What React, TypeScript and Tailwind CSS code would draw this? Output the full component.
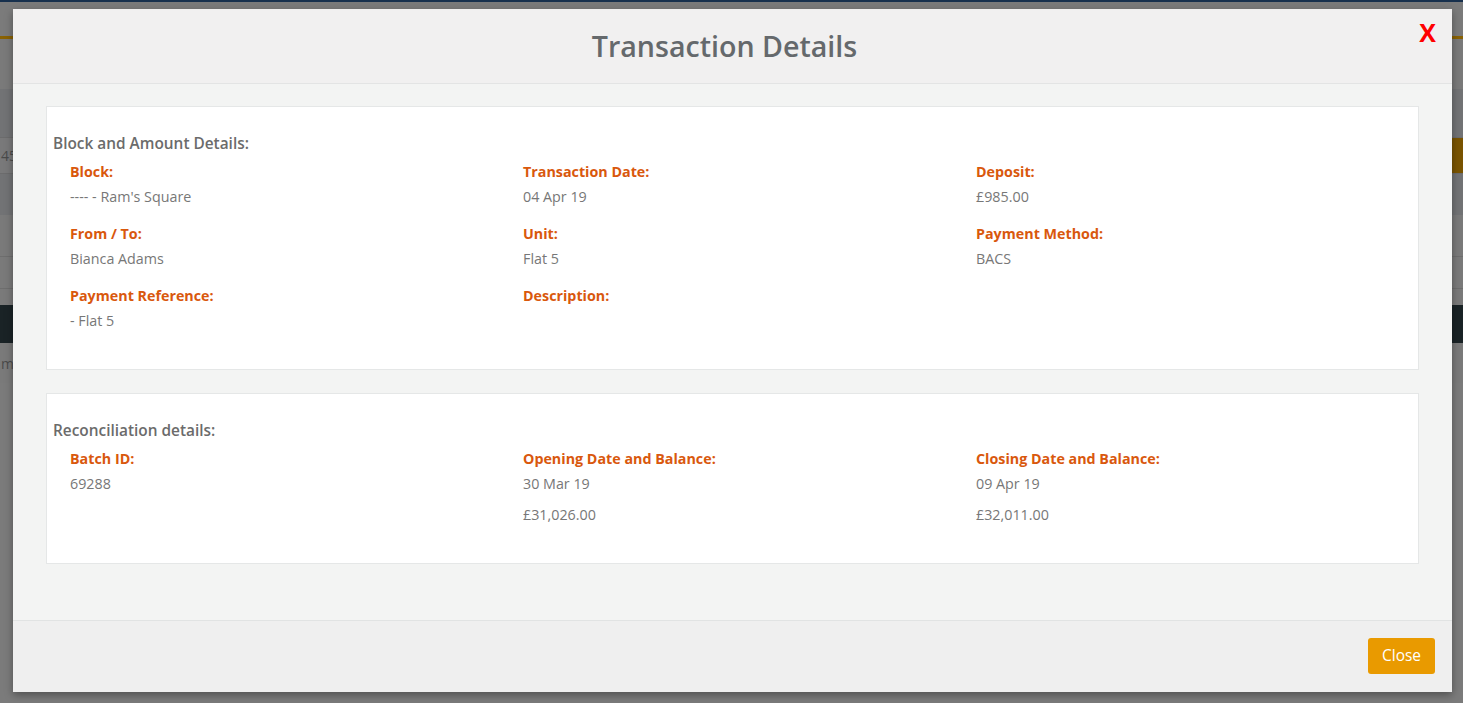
import React from "react";

const Field = ({ label, values }: { label: string; values: string[] }) => (
  <div className="flex flex-col">
    <div className="h-[20px] leading-[20px] text-[14.3px] font-bold text-[#d9580d]">{label}</div>
    {values.map((v, i) => (
      <div key={i} className={`h-[20px] leading-[20px] text-[14.3px] text-[#777777] ${i === 0 ? "mt-[5px]" : "mt-[11px]"}`}>
        {v}
      </div>
    ))}
  </div>
);

export default function App() {
  return (
    <div className="relative w-[1463px] h-[703px] overflow-hidden bg-[#7b7b7b]" style={{ fontFamily: '"Open Sans", "Noto Sans", sans-serif' }}>
      {/* dimmed background page */}
      <div className="flex flex-col w-full">
        <div className="h-[2px] bg-[#17304d]" />
        <div className="h-[34px] bg-[#7b7b7b]" />
        <div className="h-[3px] bg-[#8a6203]" />
        <div className="h-[50px] bg-[#7a7a7a]" />
        <div className="h-[48px] bg-[#727375]" />
        <div className="h-[37px] bg-[#79797a] border-y border-[#6c6c6d] flex items-center justify-between">
          <span className="text-[14px] text-[#4a4a4a] pl-[1px] w-[13px] overflow-hidden whitespace-nowrap">45</span>
          <div className="h-full w-[40px] bg-[#7a5400] flex items-center pl-[3px] text-[14px] text-[#b59a66]">U</div>
        </div>
        <div className="h-[41px] bg-[#727375]" />
        <div className="h-[41px] bg-[#7a7a7a]" />
        <div className="h-[33px] bg-[#7a7a7a] border-y border-[#6e6e6e]" />
        <div className="h-[16px] bg-[#7a7a7a]" />
        <div className="h-[38px] bg-[#1a2326]" />
        <div className="h-[40px] bg-[#7a7a7a] flex items-center">
          <span className="text-[14px] text-[#4a4a4a] pl-[1px] w-[13px] overflow-hidden whitespace-nowrap">m'</span>
        </div>
      </div>

      {/* modal */}
      <div className="absolute left-[13px] top-[9px] w-[1439px] h-[683px] flex flex-col bg-[#f3f4f3] shadow-[0_3px_8px_rgba(0,0,0,0.35)]">
        <div className="relative h-[75px] shrink-0 bg-[#f1f0f0] border-b border-[#e3e4e4] flex items-center justify-center pr-[16px]">
          <h1 className="text-[28.6px] font-semibold text-[#65696c] leading-none">Transaction Details</h1>
          <button className="absolute right-[16px] top-[11px] text-[25px] font-bold text-[#ff0000] leading-none">X</button>
        </div>

        <div className="flex-1 px-[33px] pt-[22px] flex flex-col gap-[23px]">
          <div className="bg-white border border-[#e5e7e7] pt-[27px] pb-[38px] px-[6px]">
            <div className="h-[20px] leading-[20px] text-[15.4px] font-semibold text-[#6b6b6b]">Block and Amount Details:</div>
            <div className="mt-[8px] px-[2px] grid grid-cols-3 gap-y-[17px] w-[1363px]">
              <div className="px-[15px]"><Field label="Block:" values={["---- - Ram's Square"]} /></div>
              <div className="px-[15px]"><Field label="Transaction Date:" values={["04 Apr 19"]} /></div>
              <div className="px-[15px]"><Field label="Deposit:" values={["£985.00"]} /></div>
              <div className="px-[15px]"><Field label="From / To:" values={["Bianca Adams"]} /></div>
              <div className="px-[15px]"><Field label="Unit:" values={["Flat 5"]} /></div>
              <div className="px-[15px]"><Field label="Payment Method:" values={["BACS"]} /></div>
              <div className="px-[15px]"><Field label="Payment Reference:" values={["- Flat 5"]} /></div>
              <div className="px-[15px]"><Field label="Description:" values={[]} /></div>
              <div className="px-[15px]" />
            </div>
          </div>

          <div className="bg-white border border-[#e5e7e7] pt-[27px] pb-[38px] px-[6px]">
            <div className="h-[20px] leading-[20px] text-[15.4px] font-semibold text-[#6b6b6b]">Reconciliation details:</div>
            <div className="mt-[8px] px-[2px] grid grid-cols-3 w-[1363px]">
              <div className="px-[15px]"><Field label="Batch ID:" values={["69288"]} /></div>
              <div className="px-[15px]"><Field label="Opening Date and Balance:" values={["30 Mar 19", "£31,026.00"]} /></div>
              <div className="px-[15px]"><Field label="Closing Date and Balance:" values={["09 Apr 19", "£32,011.00"]} /></div>
            </div>
          </div>
        </div>

        <div className="h-[72px] shrink-0 bg-[#efefef] border-t border-[#e1e3e3] flex items-start justify-end pt-[17px] pr-[17px]">
          <button className="w-[67px] h-[36px] rounded-[3px] bg-[#e99a00] text-white text-[15.5px] leading-none">Close</button>
        </div>
      </div>
    </div>
  );
}
